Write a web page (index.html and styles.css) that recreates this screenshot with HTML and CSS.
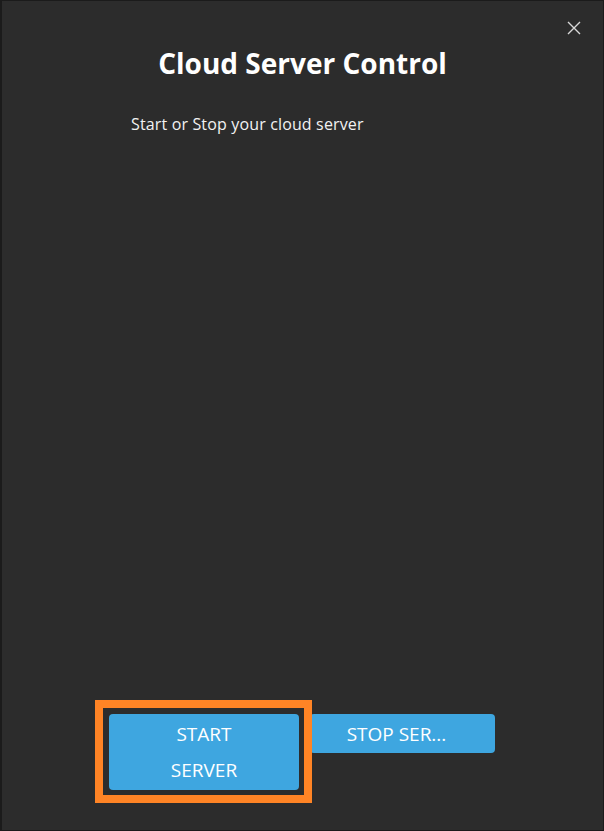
FILE: index.html
```html
<!DOCTYPE html>
<html lang="en">
<head>
  <meta charset="UTF-8">
  <title>Cloud Server Control</title>
  <meta name="viewport" content="width=device-width, initial-scale=1.0">
  <link rel="stylesheet" href="styles.css">
</head>
<body>

  <div class="dialog">
    <button class="close-btn" aria-label="Close">
      <svg width="14" height="14" viewBox="0 0 14 14">
        <path d="M1 1 L13 13 M13 1 L1 13" stroke="#d8d8d8" stroke-width="1.4" fill="none"/>
      </svg>
    </button>

    <h2 class="title">Cloud Server Control</h2>
    <p class="subtitle">Start or Stop your cloud server</p>

    <div class="spacer"></div>

    <!-- Actions -->
    <div class="actions">
      <div class="focus-wrap">
        <button class="btn btn-start">START<br>SERVER</button>
        <div class="focus-ring"></div>
      </div>
      <button class="btn btn-stop">STOP SER...</button>
    </div>
  </div>

</body>
</html>
```

FILE: styles.css
```css
html, body {
  margin: 0;
  padding: 0;
  height: 100%;
}

body {
  font-family: "Open Sans", "Noto Sans", Arial, sans-serif;
  background: #1c1c1c;
  color: #fff;
}

.dialog {
  position: relative;
  box-sizing: border-box;
  height: 100vh;
  display: flex;
  flex-direction: column;
  background: #2c2c2c;
  border: 1px solid #1b1b1b;
  border-left-width: 2px;
}

.close-btn {
  position: absolute;
  top: 18px;
  right: 20px;
  width: 18px;
  height: 18px;
  padding: 2px;
  background: none;
  border: none;
  cursor: pointer;
}

.title {
  margin: 44px 0 0;
  text-align: center;
  font-size: 28px;
  font-weight: 700;
  line-height: 36px;
}

.subtitle {
  margin: 32px 0 0;
  padding-left: 129px;
  font-size: 16px;
  letter-spacing: 0.15px;
  line-height: 22px;
  color: #f2f2f2;
}

.spacer {
  flex: 1;
}

.actions {
  display: flex;
  align-items: flex-start;
  gap: 11px;
  padding: 0 0 40px 107px;
}

.focus-wrap {
  position: relative;
}

.btn {
  display: block;
  background: #3ea6e0;
  color: #fff;
  border: none;
  border-radius: 4px;
  font-family: inherit;
  font-size: 19px;
  cursor: pointer;
}

.btn-start {
  width: 190px;
  height: 76px;
  line-height: 36px;
}

.btn-stop {
  width: 185px;
  height: 39px;
  padding: 0 12px 0 0;
  line-height: 22px;
}

.focus-ring {
  position: absolute;
  top: -14px;
  left: -14px;
  right: -13px;
  bottom: -13px;
  border: 8px solid #ff8425;
  pointer-events: none;
}
```
